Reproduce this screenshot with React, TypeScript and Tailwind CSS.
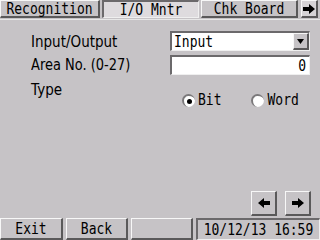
import React from 'react';

const mono = { fontFamily: '"DejaVu Sans Mono", monospace' };
const sans = { fontFamily: '"DejaVu Sans", sans-serif' };

const raised =
  'border-t border-l border-r-2 border-b-2 border-t-[#f7f7f7] border-l-[#f7f7f7] border-r-[#5a595a] border-b-[#5a595a]';
const sunken =
  'border-t-2 border-l-2 border-r border-b border-t-[#6b696b] border-l-[#6b696b] border-r-[#efefef] border-b-[#efefef]';

// bitmap-ish tall text
const T = ({ children }: { children: React.ReactNode }) => (
  <span className="inline-block scale-y-[1.18]">{children}</span>
);

const Arrow = ({ dir }: { dir: 'left' | 'right' }) => (
  <svg width="12" height="10" viewBox="0 0 12 10" className={dir === 'left' ? 'scale-x-[-1]' : ''}>
    <polygon points="0,3 6,3 6,0 12,5 6,10 6,7 0,7" fill="#000" />
  </svg>
);

const Radio = ({ checked, label }: { checked?: boolean; label: string }) => (
  <div className="flex items-center gap-[3px]">
    <div className="w-[13px] h-[13px] rounded-full bg-white border-t-2 border-l-2 border-t-[#7b797b] border-l-[#7b797b] flex items-center justify-center">
      {checked && <div className="w-[5px] h-[5px] rounded-full bg-black" />}
    </div>
    <span className="text-[13px] leading-[16px] text-black" style={mono}><T>{label}</T></span>
  </div>
);

export default function App() {
  return (
    <div className="w-[320px] h-[240px] bg-[#c6c3c6] flex flex-col overflow-hidden text-black" style={mono}>
      {/* TAB BAR */}
      <div className="flex h-[18px]">
        <div className={`w-[100px] h-full flex items-center justify-center text-[13px] bg-[#c6c3c6] ${raised}`}><T>Recognition</T></div>
        <div className={`ml-[2px] w-[97px] h-full flex items-center justify-center text-[13px] bg-[#dedbde] ${sunken}`}><T>I/O Mntr</T></div>
        <div className={`ml-[2px] w-[97px] h-full flex items-center justify-center text-[13px] bg-[#c6c3c6] ${raised}`}><T>Chk Board</T></div>
        <div className={`ml-[3px] w-[17px] h-full flex items-center justify-center bg-[#d6d3d6] ${raised}`}>
          <Arrow dir="right" />
        </div>
      </div>
      <div className="h-[1px] mt-[1px] bg-[#e7e7e7]" />

      {/* CONTENT */}
      <div className="flex-1 flex flex-col pl-[31px] pt-[11px]">
        <div className="flex h-[20px] items-center">
          <span className="w-[139px] text-[13.5px]" style={sans}><T>Input/Output</T></span>
          <div className={`w-[140px] h-[20px] bg-white flex items-center ${sunken}`}>
            <span className="flex-1 pl-[2px] text-[13px] leading-none"><T>Input</T></span>
            <div className={`w-[16px] h-full bg-[#c6c3c6] flex items-center justify-center ${raised}`}>
              <svg width="7" height="5" viewBox="0 0 7 5"><polygon points="0,0 7,0 3.5,5" fill="#000" /></svg>
            </div>
          </div>
        </div>
        <div className="flex h-[20px] items-center mt-[4px]">
          <span className="w-[139px] text-[13px]" style={sans}><T>Area No. (0-27)</T></span>
          <div className={`w-[140px] h-[20px] bg-white flex items-center justify-end pr-[3px] text-[13px] ${sunken}`}><T>0</T></div>
        </div>
        <div className="flex">
          <span className="w-[139px] mt-[6px] h-[16px] leading-[16px] text-[13.5px]" style={sans}><T>Type</T></span>
          <div className="mt-[17px] pl-[12px] flex items-center gap-[30px]">
            <Radio checked label="Bit" />
            <Radio label="Word" />
          </div>
        </div>
        <div className="flex-1" />
        <div className="flex justify-end gap-[8px] pr-[9px] mb-[2px]">
          <div className={`w-[26px] h-[25px] flex items-center justify-center ${raised}`}><Arrow dir="left" /></div>
          <div className={`w-[26px] h-[25px] flex items-center justify-center ${raised}`}><Arrow dir="right" /></div>
        </div>
      </div>

      {/* BOTTOM BAR */}
      <div className="flex h-[22px] text-[13px]">
        <div className={`w-[63px] h-full flex items-center justify-center ${raised}`}><T>Exit</T></div>
        <div className={`ml-[3px] w-[62px] h-full flex items-center justify-center ${raised}`}><T>Back</T></div>
        <div className={`ml-[3px] w-[62px] h-full ${raised}`} />
        <div className={`ml-[3px] flex-1 h-full flex items-center justify-center ${sunken}`}><T>10/12/13 16:59</T></div>
      </div>
    </div>
  );
}
